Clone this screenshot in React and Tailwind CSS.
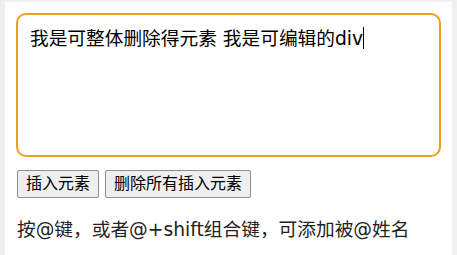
import React from "react";

const App = () => {
  return (
    <div className="min-h-screen bg-[#f0f0f0] pt-[2px] px-[5px] font-['DejaVu_Sans','Noto_Sans_CJK_SC',sans-serif]">
      <div className="bg-white min-h-[253px] px-[11px] pt-[11px]">
        {/* editable area */}
        <div
          contentEditable
          suppressContentEditableWarning
          className="h-[144px] border-2 border-[#eba21b] rounded-[10px] px-3 pt-[10px] text-[18.7px] leading-[28px] text-black outline-none"
        >
          我是可整体删除得元素 我是可编辑的div<span className="inline-block w-px h-[22px] bg-black align-middle -mt-[3px]"></span>
        </div>

        <div className="flex gap-[6px] mt-[13px] ml-px">
          <button className="h-[28px] px-2 text-[16px] text-black bg-[#efefef] border border-[#8f8f8f] rounded-[2px]">
            插入元素
          </button>
          <button className="h-[28px] px-2 text-[16px] text-black bg-[#efefef] border border-[#8f8f8f] rounded-[2px]">
            删除所有插入元素
          </button>
        </div>

        <p className="mt-[18px] ml-px text-[18.7px] leading-[28px] text-[#222]">
          按@键，或者@+shift组合键，可添加被@姓名
        </p>
      </div>
    </div>
  );
};

export default App;
